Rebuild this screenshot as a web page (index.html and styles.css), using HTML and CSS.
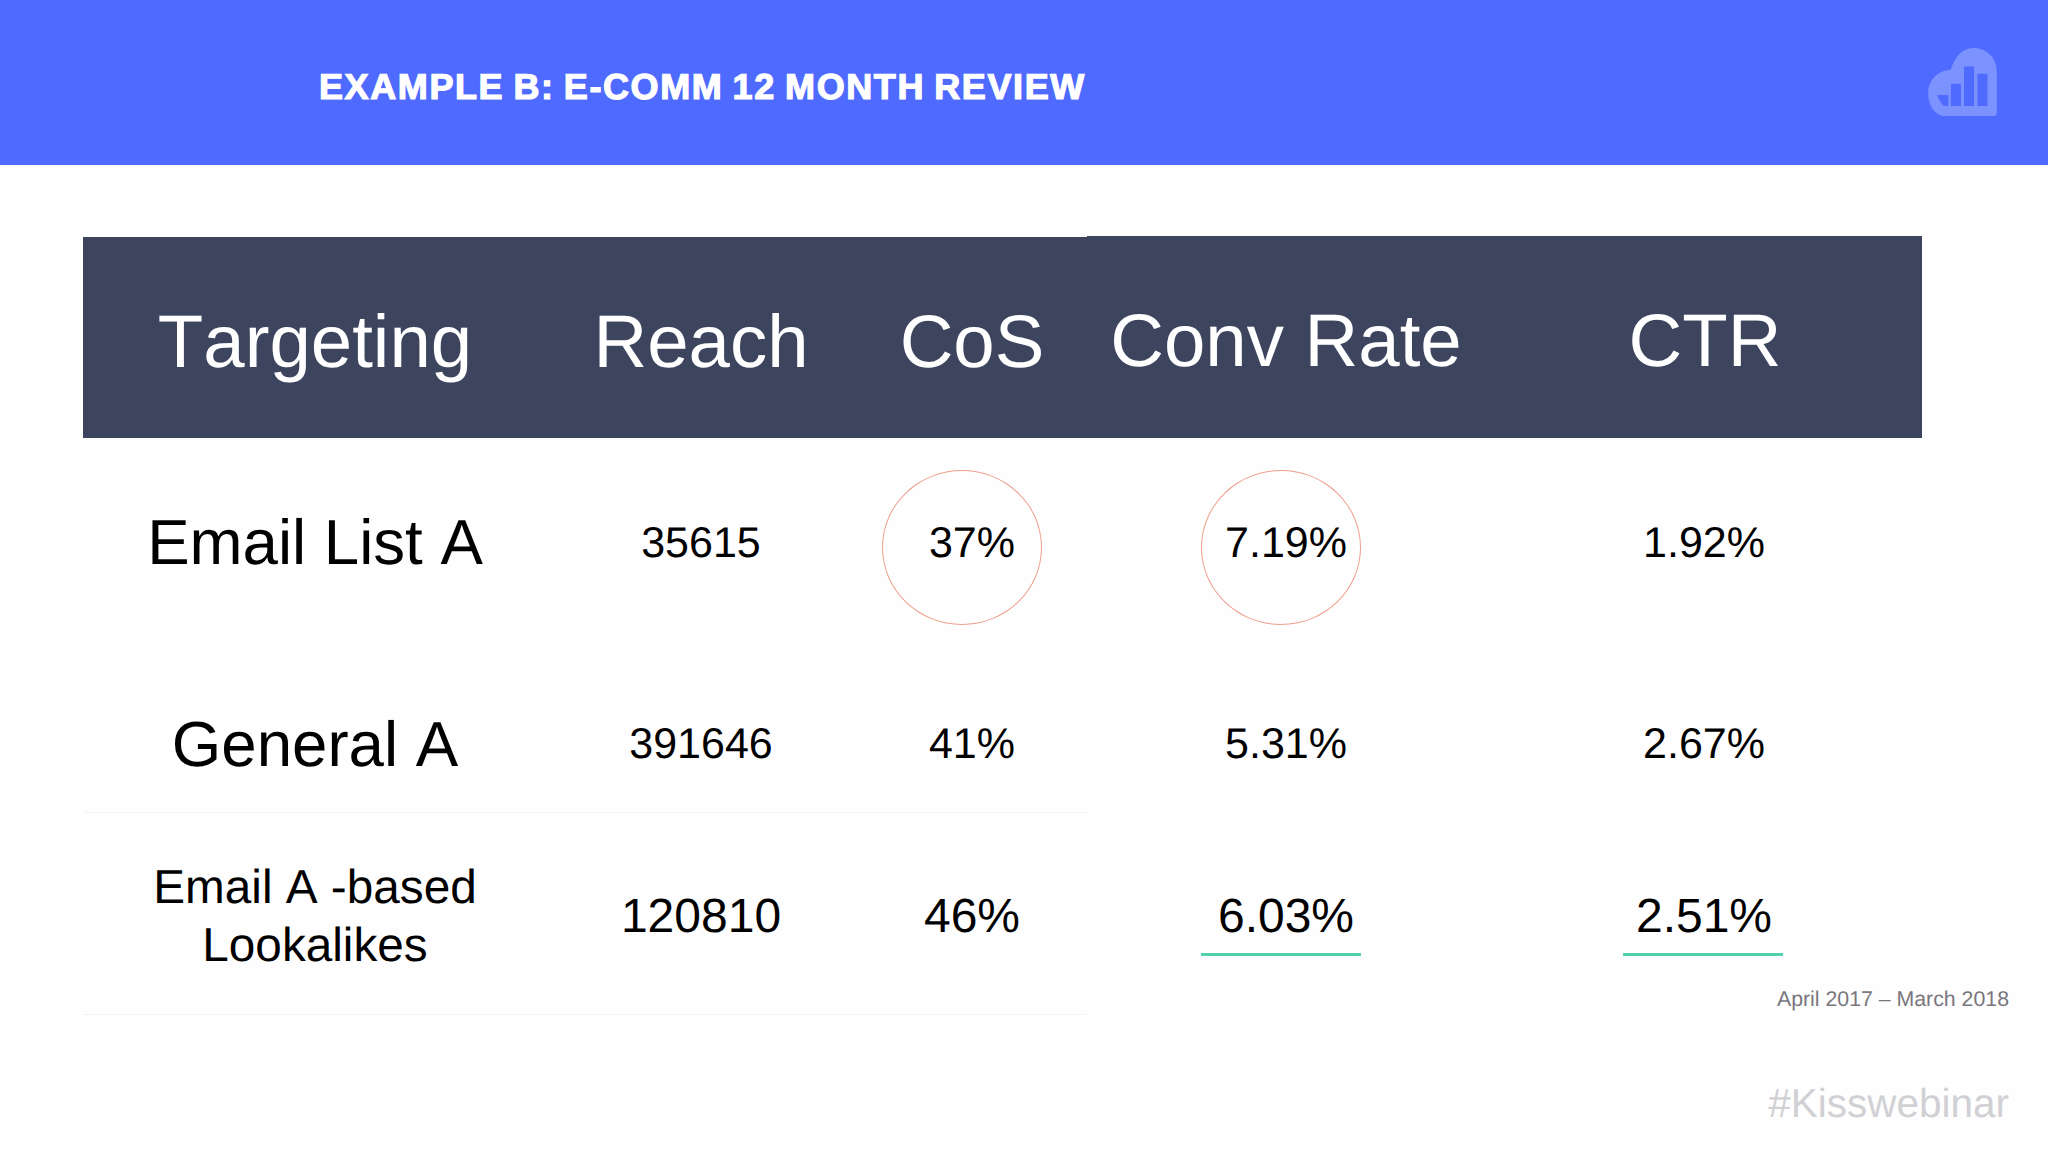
FILE: index.html
```html
<!DOCTYPE html>
<html lang="en">
<head>
<meta charset="utf-8">
<title>Example B: E-Comm 12 Month Review</title>
<link rel="stylesheet" href="styles.css">
</head>
<body>
<div class="slide">
  <header class="banner">
    <h1 class="banner-title">EXAMPLE B: E-COMM 12 MONTH REVIEW</h1>
    <svg class="logo" viewBox="145 85 205 203" aria-hidden="true">
      <path class="logo-shape" d="M195 288C165 288 145 255 145 220C145 180 175 152 212 150C225 110 250 85 280 85C320 85 350 115 350 155V278Q350 288 340 288Z"/>
      <path class="logo-bar" d="M172 225H205V258H192Q178 245 172 225ZM213 192H243V258H213ZM252 140H282V258H252ZM292 162H322V258H292Z"/>
    </svg>
  </header>
  <main class="report">
    <div class="row head">
      <div class="cell cover">Targeting</div>
      <div class="cell cover">Reach</div>
      <div class="cell cover">CoS</div>
      <div class="cell">Conv Rate</div>
      <div class="cell">CTR</div>
    </div>
    <div class="row first">
      <div class="cell name">Email List A</div>
      <div class="cell num">35615</div>
      <div class="cell num"><span class="ring ring-cos"></span>37%</div>
      <div class="cell num"><span class="ring ring-conv"></span>7.19%</div>
      <div class="cell num">1.92%</div>
    </div>
    <div class="row second">
      <div class="cell name ruled">General A</div>
      <div class="cell num ruled">391646</div>
      <div class="cell num ruled">41%</div>
      <div class="cell num">5.31%</div>
      <div class="cell num">2.67%</div>
    </div>
    <div class="row third">
      <div class="cell sub ruled">Email A -based<br>Lookalikes</div>
      <div class="cell big ruled">120810</div>
      <div class="cell big ruled">46%</div>
      <div class="cell big"><span class="mark mark-conv"></span>6.03%</div>
      <div class="cell big"><span class="mark mark-ctr"></span>2.51%</div>
    </div>
    <div class="notes">
      <p class="period">April 2017 – March 2018</p>
      <p class="tag">#Kisswebinar</p>
    </div>
  </main>
</div>
</body>
</html>
```
FILE: styles.css
```css
* { box-sizing: border-box; }
html, body { margin: 0; padding: 0; }
body {
  width: 2048px;
  height: 1152px;
  overflow: hidden;
  background: #fffefe;
  font-family: "Liberation Sans", Arial, sans-serif;
  font-kerning: none;
  text-rendering: geometricPrecision;
  color: #000;
}
.slide { width: 2048px; height: 1152px; }
.banner {
  height: 165px;
  background: #4f6bff;
  display: flex;
  align-items: center;
  justify-content: space-between;
  padding: 0 51px 0 319px;
}
.banner-title {
  margin: 9px 0 0;
  color: #fff;
  font-size: 36px;
  line-height: 40px;
  font-weight: 700;
  letter-spacing: 1.6px;
  word-spacing: -2.4px;
  -webkit-text-stroke: 1.2px #fff;
}
.logo { width: 69px; height: 68px; margin-top: -1px; display: block; }
.logo-shape { fill: #7b92ff; }
.logo-bar { fill: #4f6bff; }
.report { padding: 71px 0 0 83px; width: 1922px; }
.row {
  display: grid;
  grid-template-columns: 464px 308px 232px 396px 439px;
}
.cell {
  position: relative;
  display: flex;
  align-items: center;
  justify-content: center;
  text-align: center;
}
.cell:nth-child(3), .cell:nth-child(4) { padding-left: 2px; }
.cell:nth-child(5) { padding-left: 3px; }
.head {
  height: 202px;
  background: #3d445e;
  color: #fff;
  font-size: 74.4px;
  line-height: 86px;
}
.head .cell { padding-top: 8px; }
.head .cell:nth-child(5) { padding-left: 5px; }
.cover { border-top: 1px solid #fffefe; }
.first { height: 208px; }
.first .num { padding-top: 2px; }
.first .name { padding-top: 2px; }
.second { height: 167px; }
.second .cell { padding-top: 29px; }
.second .name { padding-top: 31px; }
.third { height: 202px; }
.third .cell { padding-top: 5px; }
.third .ruled { padding-top: 6px; }
.ruled { border-bottom: 1px solid #f4f3f3; }
.name { font-size: 63.6px; line-height: 70px; }
.num { font-size: 43px; line-height: 50px; }
.big { font-size: 48px; line-height: 56px; }
.sub { font-size: 47.7px; line-height: 57.5px; }
.ring {
  position: absolute;
  top: 32px;
  left: 0;
  width: 160px;
  height: 155px;
  border: 1.5px solid #ee9f8d;
  border-radius: 50%;
}
.ring-cos { left: 27px; }
.ring-conv { left: 114px; }
.mark {
  position: absolute;
  top: 140px;
  width: 160px;
  height: 3px;
  background: #4fd0ab;
}
.mark-conv { left: 114px; }
.mark-ctr { left: 140px; }
.notes {
  margin-top: -30px;
  margin-right: -87px;
  text-align: right;
}
.notes p { margin: 0; }
.period { font-size: 21.3px; line-height: 28px; color: #77777d; }
.tag { margin-top: 67px !important; font-size: 40.5px; line-height: 46px; color: #d0d0d5; }
```
